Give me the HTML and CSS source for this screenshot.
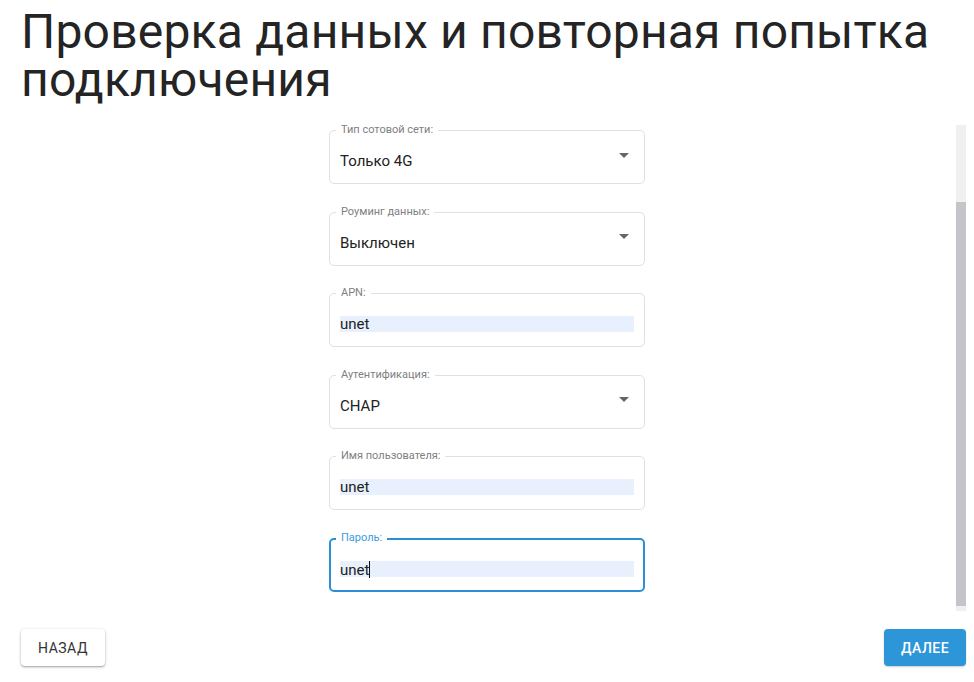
FILE: index.html
```html
<!DOCTYPE html>
<html lang="ru">
<head>
<meta charset="utf-8">
<title>Проверка данных</title>
<link rel="stylesheet" href="styles.css">
</head>
<body>
<div class="page">
  <h1 class="title">Проверка данных и повторная попытка подключения</h1>
  <div class="main">
    <div class="form-area">
      <div class="form">
        <div class="field">
          <span class="label">Тип сотовой сети:</span>
          <span class="value">Только 4G</span>
          <span class="arrow"></span>
        </div>
        <div class="field">
          <span class="label">Роуминг данных:</span>
          <span class="value">Выключен</span>
          <span class="arrow"></span>
        </div>
        <div class="field">
          <span class="label">APN:</span>
          <span class="input">unet</span>
        </div>
        <div class="field">
          <span class="label">Аутентификация:</span>
          <span class="value">CHAP</span>
          <span class="arrow"></span>
        </div>
        <div class="field">
          <span class="label">Имя пользователя:</span>
          <span class="input">unet</span>
        </div>
        <div class="field focused">
          <span class="label">Пароль:</span>
          <span class="input">unet<span class="caret"></span></span>
        </div>
      </div>
    </div>
    <div class="scrollbar"><div class="thumb"></div></div>
  </div>
  <div class="footer">
    <button class="btn btn-back">НАЗАД</button>
    <button class="btn btn-next">ДАЛЕЕ</button>
  </div>
</div>
</body>
</html>
```
FILE: styles.css
```css
html, body {
  margin: 0;
  padding: 0;
  background: #ffffff;
}
body {
  font-family: Roboto, "Liberation Sans", sans-serif;
  width: 974px;
  height: 682px;
  overflow: hidden;
}
.page {
  display: flex;
  flex-direction: column;
  height: 682px;
}
.title {
  margin: 0;
  padding: 8px 0 0 21px;
  font-size: 48px;
  line-height: 48px;
  font-weight: 400;
  letter-spacing: 0.2px;
  color: #242424;
}
.main {
  display: flex;
  margin-top: 21px;
  height: 486px;
}
.form-area {
  flex: 1;
  display: flex;
  justify-content: center;
  padding-left: 18px;
  padding-top: 5px;
}
.form {
  width: 316px;
  display: flex;
  flex-direction: column;
  gap: 27.6px;
}
.field {
  position: relative;
  box-sizing: border-box;
  height: 54px;
  border: 1px solid #e0e0e0;
  border-radius: 5px;
  display: flex;
  align-items: center;
  padding: 0 10px;
}
.label {
  position: absolute;
  top: -7px;
  left: 6px;
  padding: 0 5px;
  background: #ffffff;
  font-size: 11px;
  line-height: 12px;
  color: #808080;
}
.value {
  font-size: 15px;
  color: #222222;
  margin-top: 8px;
}
.arrow {
  margin-left: auto;
  margin-right: 5px;
  margin-bottom: 4px;
  width: 0;
  height: 0;
  border-left: 5px solid transparent;
  border-right: 5px solid transparent;
  border-top: 5px solid #666666;
}
.input {
  flex: 1;
  height: 16px;
  line-height: 16px;
  margin-top: 8px;
  background: #e8f0fe;
  font-size: 15px;
  color: #222222;
}
.caret {
  display: inline-block;
  width: 1px;
  height: 17px;
  background: #111111;
  vertical-align: -3px;
}
.focused {
  border: 2px solid #2b8fd6;
  padding: 0 9px;
}
.focused .label {
  top: -8px;
  left: 5px;
  color: #3d9be0;
}
.scrollbar {
  width: 10px;
  margin-right: 8px;
  background: #f0f0f0;
}
.thumb {
  margin-top: 77px;
  height: 404px;
  background: #c4c5ca;
}
.footer {
  display: flex;
  justify-content: space-between;
  padding: 18px 8px 0 21px;
}
.btn {
  box-sizing: border-box;
  height: 37px;
  border: none;
  border-radius: 4px;
  font-family: Roboto, "Liberation Sans", sans-serif;
  font-size: 14px;
  letter-spacing: 0.5px;
  padding: 0;
}
.btn-back {
  width: 84px;
  background: #ffffff;
  color: #333333;
  font-weight: 400;
  box-shadow: 0 1px 3px rgba(0, 0, 0, 0.3), 0 1px 1px rgba(0, 0, 0, 0.12);
}
.btn-next {
  width: 82px;
  background: #2d96d8;
  color: #ffffff;
  font-weight: 500;
  box-shadow: 0 1px 2px rgba(0, 0, 0, 0.2);
}
```
